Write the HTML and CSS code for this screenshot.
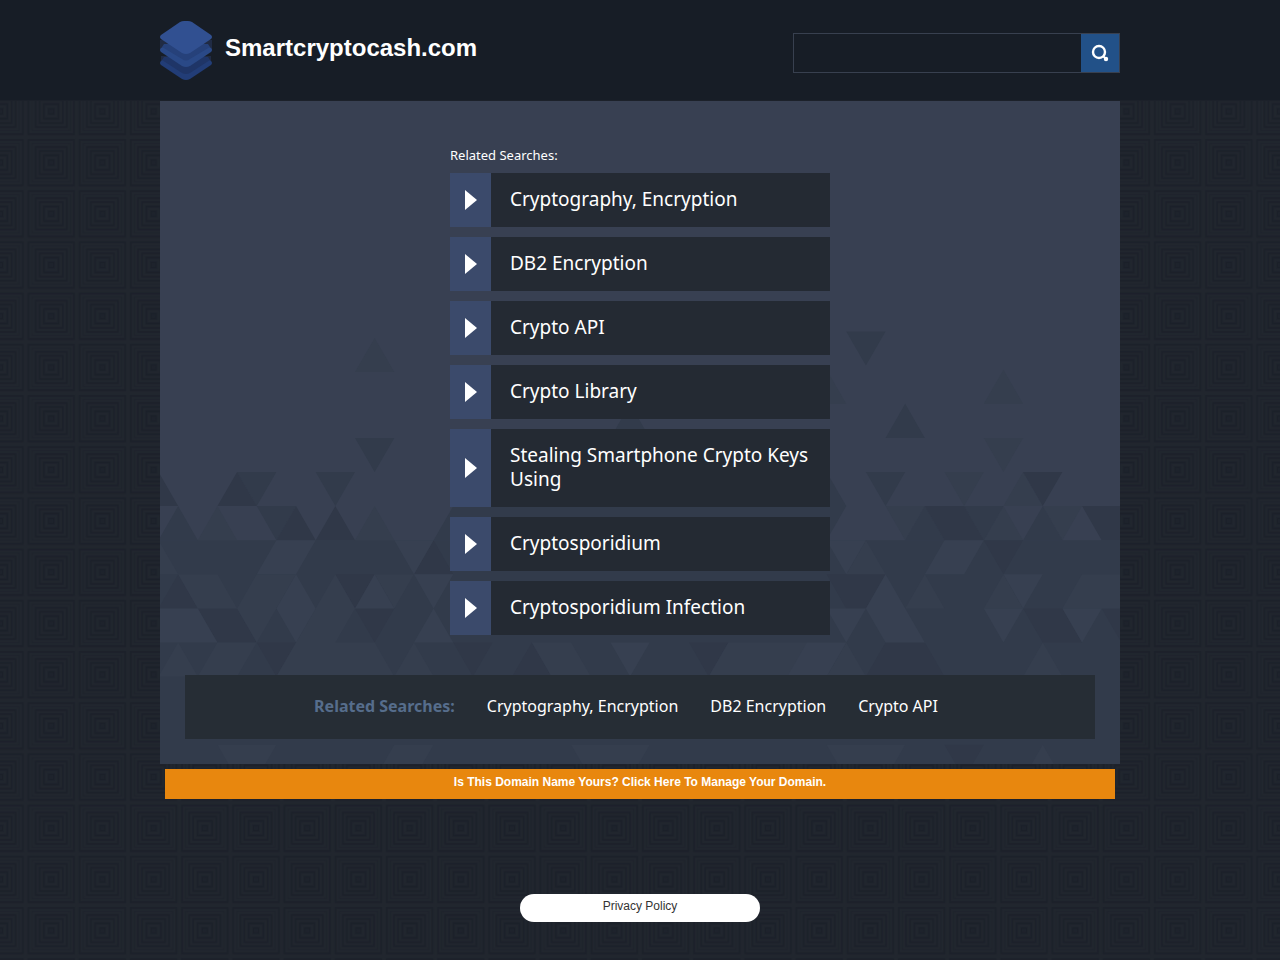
FILE: index.html
```
<!DOCTYPE html>
<html lang="en">
<head>
<meta charset="utf-8">
<title>Smartcryptocash.com</title>
<link rel="stylesheet" href="styles.css">
</head>
<body>
<header class="header">
  <div class="wrap header-inner">
    <svg class="logo" width="52" height="59" viewBox="0 0 52 59" aria-hidden="true">
      <path fill="#202b44" d="M0 19h52v10H0zM1 35h50v6H1z"/>
      <path fill="#223d77" d="M1 40L22 27q4-2 8 0l21 13q2 2 0 4L30 58q-4 2-8 0L1 44q-2-2 0-4z"/>
      <path fill="#1f3567" d="M4 36h44l2 3-20 13q-4 2-8 0L2 39z"/>
      <path fill="#2a4987" d="M1 27l21-13q4-2 8 0l21 13q2 2 0 4L30 45q-4 2-8 0L1 31q-2-2 0-4z"/>
      <path fill="#26417a" d="M4 23h44l2 3-20 12q-4 3-8 0L2 26z"/>
      <path fill="#315091" d="M1 14L20 1q2-1 4-1h4q2 0 4 1l19 13q1 1 1 2t-1 2L30 32q-4 2-8 0L1 18q-1-1-1-2t1-2z"/>
    </svg>
    <h1>Smartcryptocash.com</h1>
    <form class="search">
      <input type="text" name="q" aria-label="Search">
      <button type="submit" aria-label="Search">
        <svg width="18" height="18" viewBox="0 0 18 18" fill="none" stroke="#fff" aria-hidden="true">
          <circle cx="8" cy="8" r="6" stroke-width="2.400"/>
          <path d="M12 12l3 3" stroke-width="2"/>
          <circle cx="15" cy="15" r="2.200" fill="#fff" stroke="none"/>
        </svg>
      </button>
    </form>
  </div>
</header>

<main class="wrap">
  <div class="panel">
    <!-- one unit = half a triangle wide, one triangle high -->
    <svg class="triangles" viewBox="0 230 960 433" preserveAspectRatio="xMidYMax slice" aria-hidden="true">
      <g transform="translate(-1.500 371) scale(19.650 34.100)">
        <path class="t-mid" d="M-1 2h52v7H-1z"/>
        <path class="t-faint" d="M10 -2.930h2l-1-1zM33 -2h2l-1-1zM42 -2h2l-1-1zM42 -1h2l-1 1zM40 0h2l-1 1zM43 1h2l-1-1zM2 2h2l-1-1zM10 2h2l-1-1zM37 1h2l-1 1zM42 2h2l-1-1zM45 1h2l-1 1z"/>
        <path class="t-mid" d="M35 -4.120h2l-1 1zM10 -1h2l-1 1zM37 -1h2l-1-1zM23 -1h2l-1-1zM4 0h2l-1 1zM8 0h2l-1 1zM36 0h2l-1 1zM33 1h2l-1-1zM33 1h2l-1 1zM0 2h2l-1-1zM5 1h2l-1 1zM38 2h2l-1-1zM41 1h2l-1 1zM44 2h2l-1-1zM15 1h18l1 1H14z"/>
        <path class="t-dark" d="M-1 1h2l-1-1zM3 1h2l-1-1zM44 0h2l-1 1zM6 2h2l-1-1zM8 2h2l-1-1zM39 1h2l1 1h-2zM47 1h4v1h-3zM42 2h2l-1 1zM13 3h2l-1-1zM0 4h2l-1-1zM2 4h2l1 1H3zM10 4h2l-1 1zM5 5h2l-1 1zM36 6h4l-1-1h-2zM44 4h2l1 1h-2zM48 4h2l-1 1zM34 3h3l-1 1h-1zM40 8h2l-1 1zM15 5h2l-1 1zM27 5h2l-1 1zM9 3h2l-1 1zM18 6h2l-1-1z"/>
        <path class="t-faint" d="M-1 3h2l-1-1zM1 3h2l-1 1zM2 4h2l-1-1zM4 4h2l-1-1zM5 3h2l-1 1zM8 4h2l-1-1zM11 3h2l-1 1zM4 4h2l-1 1zM7 5h2l-1-1zM8 4h2l-1 1zM0 6h2l-1-1zM2 6h2l1-1H3zM6 6h6l-1-1H7zM12 6h2l-1-1zM35 3h2l-1-1zM42 4h2l-1-1zM38 4h2l-1-1zM46 4h4l-1-1h-2zM44 6h2l-1-1zM34 6h2l-1-1zM34 8h4l-1 1h-2zM3 8h3l-1 1H4zM12 8h2l-1 1h-2zM21 8h4l-1 1h-2zM44 9h2l-1-1zM29 5h4l1 1h-6zM19 5h2l1 1h-2z"/>
        <path class="t-base" d="M5 3l1-1h2l-1 1zM12 2h2l-1 1zM6 4h2l-1-1zM6 4h2l-1 1zM10 4h2l-1-1zM13 3h2l-1 1zM-1 4h3l1 1h-4zM13 5h2l-1-1zM34 2h2l-1 1zM39 3l1-1h2l-1 1zM36 4h2l1 1h-2zM36 4h2l-1-1zM43 3h2l-1 1zM34 4h2l-1 1zM42 4h2l-1 1zM46 4h2l-1 1zM33 5h2l-1 1h-2zM23 5h2l-1 1z"/>
      </g>
    </svg>
    <section class="related">
      <h2>Related Searches:</h2>
      <ul>
        <li><a href="#">Cryptography, Encryption</a></li>
        <li><a href="#">DB2 Encryption</a></li>
        <li><a href="#">Crypto API</a></li>
        <li><a href="#">Crypto Library</a></li>
        <li><a href="#">Stealing Smartphone Crypto Keys Using</a></li>
        <li><a href="#">Cryptosporidium</a></li>
        <li><a href="#">Cryptosporidium Infection</a></li>
      </ul>
    </section>
    <nav class="bottom-links">
      <strong>Related Searches:</strong>
      <a href="#">Cryptography, Encryption</a>
      <a href="#">DB2 Encryption</a>
      <a href="#">Crypto API</a>
    </nav>
  </div>
  <a class="manage" href="#">Is This Domain Name Yours? Click Here To Manage Your Domain.</a>
</main>

<footer>
  <a class="privacy" href="#">Privacy Policy</a>
</footer>
</body>
</html>
```

FILE: styles.css
```
* {
  box-sizing: border-box;
}
body {
  margin: 0;
  color: #fff;
  font-family: 'Noto Sans', sans-serif;
  background: #1e232c url("data:image/svg+xml,%3Csvg xmlns='http://www.w3.org/2000/svg' width='256' height='256' viewBox='0 0 320 320'%3E%3Cdefs%3E%3Cpattern id='p' x='-32' y='-32' width='64' height='64' patternUnits='userSpaceOnUse'%3E%3Cg fill='none' stroke='%2321262e' stroke-width='2'%3E%3Cpath d='M0 0h64v64H0z' stroke-width='4'/%3E%3Cpath d='M6 6h52v52H6zM10 10h44v44H10zM15 15h34v34H15zM20 20h24v24H20zM26 26h12v12H26z'/%3E%3C/g%3E%3Cg fill='none' stroke='%231b2029' stroke-width='1.5'%3E%3Cpath d='M3.500 3.500h57v57h-57zM12.500 12.500h39v39h-39zM17.500 17.500h29v29h-29zM23 23h18v18H23zM29 29h6v6h-6z'/%3E%3C/g%3E%3C/pattern%3E%3C/defs%3E%3Cpath fill='url(%23p)' d='M0 0h320v320H0z'/%3E%3C/svg%3E") 0 9px;
}
a {
  color: #fff;
  text-decoration: none;
}
.wrap {
  max-width: 960px;
  margin: 0 auto;
}
.header {
  background: #171d26;
  border-bottom: 1px solid #1c212a;
}
.header-inner {
  display: flex;
  align-items: center;
  height: 100px;
}
.logo {
  flex: none;
}
.header h1 {
  margin: 0 auto 5px 13px;
  font: bold 24px/30px 'Liberation Sans', sans-serif;
}
.search {
  display: flex;
  width: 327px;
  height: 40px;
  margin-top: 6px;
  border: 1px solid #38404f;
}
.search input {
  flex: 1;
  min-width: 0;
  padding: 0 10px;
  border: 0;
  background: transparent;
  color: #fff;
  font-size: 16px;
}
.search button {
  display: flex;
  align-items: center;
  justify-content: center;
  width: 38px;
  padding: 0;
  border: 0;
  background: #225188;
}

/* main panel */
.panel {
  position: relative;
  padding: 44px 25px 25px;
  background: #384052;
}
.triangles {
  position: absolute;
  left: 0;
  bottom: 0;
  width: 100%;
  height: 433px;
}
.t-base { fill: #374051; }
.t-faint { fill: #353e4e; }
.t-mid { fill: #323b4b; }
.t-dark { fill: #303848; }
.related {
  position: relative;
  max-width: 380px;
  margin: 0 auto 40px;
}
.related h2 {
  margin: 0 0 8px;
  font-size: 13px;
  line-height: 20px;
  font-weight: normal;
}
.related ul {
  display: grid;
  gap: 10px;
  margin: 0;
  padding: 0;
  list-style: none;
}
.related li a {
  display: flex;
  align-items: center;
  min-height: 54px;
  padding: 14px 15px 16px 60px;
  background: linear-gradient(to right, #3b4a6b 41px, #242a33 41px);
  position: relative;
  font-size: 19px;
  line-height: 24px;
}
.related li a::before {
  content: '';
  position: absolute;
  left: 15px;
  top: calc(50% - 10px);
  border: solid transparent;
  border-width: 10px 0 10px 12px;
  border-left-color: #fff;
}
.bottom-links {
  position: relative;
  display: flex;
  flex-wrap: wrap;
  justify-content: center;
  gap: 0 32px;
  padding: 19px 30px 21px 2px;
  background: #262d35;
  font-size: 16px;
  line-height: 24px;
}
.bottom-links strong {
  color: #566d8c;
}
.manage {
  display: block;
  margin: 5px;
  padding: 5px 0 9px;
  background: #e8870e;
  text-align: center;
  font: bold 12px/16px 'Liberation Sans', sans-serif;
}
footer {
  padding: 90px 0 38px;
}
.privacy {
  display: block;
  width: 240px;
  margin: 0 auto;
  padding: 4px 0 8px;
  border-radius: 14px;
  background: #fff;
  color: #333;
  text-align: center;
  font: 12px/16px 'Liberation Sans', sans-serif;
}
```
